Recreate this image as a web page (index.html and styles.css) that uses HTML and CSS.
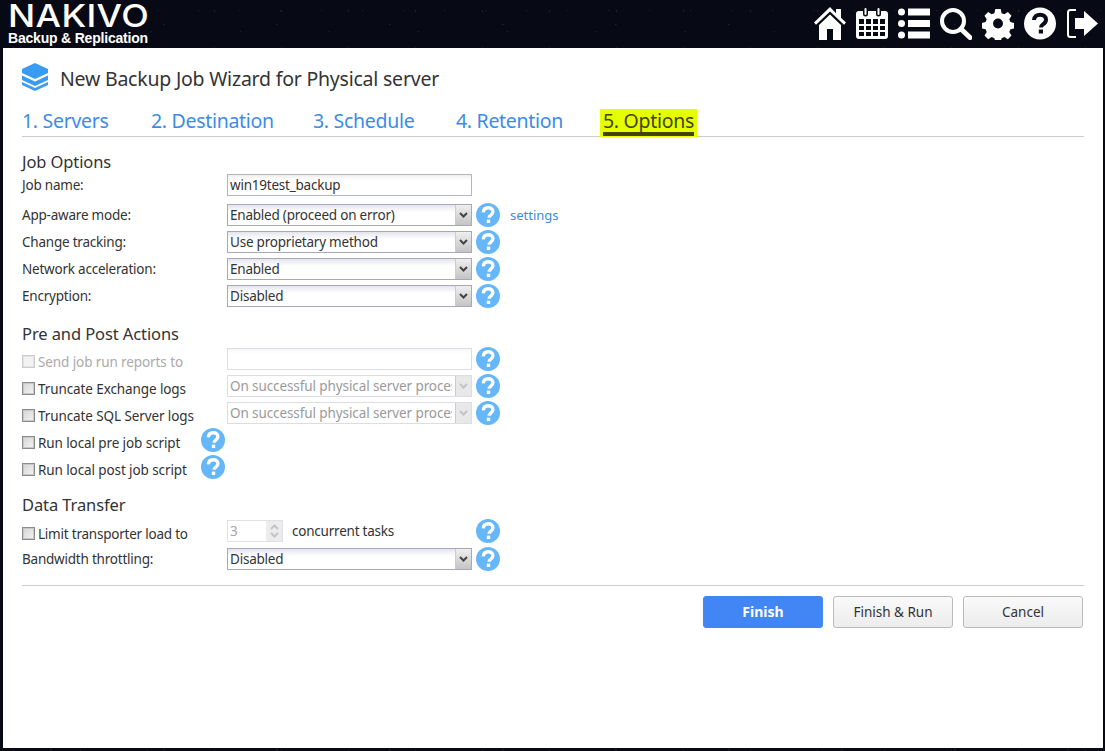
FILE: index.html
```html
<!DOCTYPE html>
<html lang="en">
<head>
<meta charset="utf-8">
<title>New Backup Job Wizard</title>
<link rel="stylesheet" href="styles.css">
</head>
<body>
<svg class="defs" width="0" height="0" aria-hidden="true">
  <symbol id="help" viewBox="0 0 24 24">
    <circle cx="12" cy="12" r="12" fill="#66b6fa"/>
    <path d="M7.3 9.300c.2-2.900 2.200-4.500 4.900-4.500 2.800 0 4.700 1.600 4.700 3.900 0 1.800-1 2.700-2.300 3.600-1 .7-1.500 1.200-1.500 2.500" fill="none" stroke="#fff" stroke-width="3.400"/>
    <rect x="10.800" y="16.600" width="3.400" height="3.400" fill="#fff"/>
  </symbol>
  <symbol id="chev" viewBox="0 0 9 6">
    <path d="M1 1l3.500 3.500L8 1" fill="none" stroke="currentColor" stroke-width="2"/>
  </symbol>
</svg>

<header class="topbar">
  <div class="logo">
    <div class="logo-main">NAKIVO</div>
    <div class="logo-sub">Backup &amp; Replication</div>
  </div>
  <nav class="icons">
    <svg class="ico" viewBox="0 0 32 33"><path fill="#fff" d="M16 0 0 15.500l2 2.300L16 4.500l14 13.300 2-2.300-5-4.800V2h-5v4.200zM16 7.500 5 18v15h8V22h6v11h8V18z"/></svg>
    <svg class="ico" viewBox="0 0 32 31"><path fill="#fff" fill-rule="evenodd" d="M3 3h4v3a2.500 2.500 0 0 0 5 0V3h8v3a2.500 2.500 0 0 0 5 0V3h4a3 3 0 0 1 3 3v22a3 3 0 0 1-3 3H3a3 3 0 0 1-3-3V6a3 3 0 0 1 3-3zM3 11v5h5v-5zm7 0v5h5v-5zm7 0v5h5v-5zm7 0v5h5v-5zM3 18v4h5v-4zm7 0v4h5v-4zm7 0v4h5v-4zm7 0v4h5v-4zM3 24v4h5v-4zm7 0v4h5v-4zm7 0v4h5v-4zm7 0v4h5v-4z"/><path d="M9.500 1v5M22.500 1v5" stroke="#fff" stroke-width="2" stroke-linecap="round"/></svg>
    <svg class="ico" viewBox="0 0 32 30"><g fill="#fff"><circle cx="3.500" cy="3.500" r="3.500"/><circle cx="3.500" cy="15" r="3.500"/><circle cx="3.500" cy="26.500" r="3.500"/><rect x="10" y="0" width="22" height="7"/><rect x="10" y="11.500" width="22" height="7"/><rect x="10" y="23" width="22" height="7"/></g></svg>
    <svg class="ico" viewBox="0 0 32 31"><circle cx="13" cy="13" r="11" fill="none" stroke="#fff" stroke-width="4"/><path d="M21 21l9 8.500" stroke="#fff" stroke-width="5" stroke-linecap="round"/></svg>
    <svg class="ico" viewBox="0 0 32 32"><path fill="#fff" fill-rule="evenodd" d="M13 0h6l1 4.500 3 1.300 4-2.500 4 4.200-2.500 3.900 1.300 3 4.200 1v6l-4.200 1-1.300 3 2.500 3.900-4 4.200-4-2.500-3 1.300-1 4.200h-6l-1-4.200-3-1.300-4 2.500-4-4.200 2.500-3.900-1.300-3-4.200-1v-6l4.200-1 1.300-3L1 7.500l4-4.200 4 2.500 3-1.300zM16 10.500a5.500 5.500 0 1 0 0 11 5.500 5.500 0 0 0 0-11z" transform="translate(1.600 1.600) scale(.9)"/></svg>
    <svg class="ico" viewBox="0 0 32 32"><circle cx="16" cy="16" r="16" fill="#fff"/><path d="M10 12.500c.2-3.400 2.700-5.300 6.100-5.300 3.500 0 5.900 2 5.900 5 0 2.300-1.200 3.400-3 4.600-1.300.9-2 1.500-2 3.100" fill="none" stroke="#0a0c1a" stroke-width="4"/><rect x="14.800" y="22" width="4.200" height="4" fill="#0a0c1a"/></svg>
    <svg class="ico" viewBox="0 0 32 31"><path d="M10 2H4.500A2.500 2.500 0 0 0 2 4.500v22A2.500 2.500 0 0 0 4.500 29H10" fill="none" stroke="#fff" stroke-width="2"/><path fill="#fff" d="M9 10h9V3l14 12.500L18 28v-7H9z"/></svg>
  </nav>
</header>

<main class="panel">
  <div class="title-row">
    <svg class="stack" viewBox="0 0 26 28"><g fill="#3a9bf2"><path d="M13 0 26 6v4L13 16 0 10V6z"/><path d="M0 12.500 13 18.500l13-6V17L13 23 0 17z"/><path d="M0 19l13 6 13-6v3L13 28 0 22z"/></g></svg>
    <h1 class="title">New Backup Job Wizard for Physical server</h1>
  </div>

  <nav class="tabs">
    <a class="tab t1">1. Servers</a>
    <a class="tab t2">2. Destination</a>
    <a class="tab t3">3. Schedule</a>
    <a class="tab t4">4. Retention</a>
    <a class="tab active"><span>5. Options</span></a>
  </nav>

  <section class="form">
    <h2 class="heading">Job Options</h2>
    <div class="row tall"><label class="lbl">Job name:</label><input class="field" type="text" value="win19test_backup"></div>
    <div class="row"><label class="lbl">App-aware mode:</label><div class="select"><span class="val">Enabled (proceed on error)</span><span class="arrow"><svg class="chev"><use href="#chev"/></svg></span></div><svg class="help"><use href="#help"/></svg><a class="link">settings</a></div>
    <div class="row"><label class="lbl">Change tracking:</label><div class="select"><span class="val">Use proprietary method</span><span class="arrow"><svg class="chev"><use href="#chev"/></svg></span></div><svg class="help"><use href="#help"/></svg></div>
    <div class="row"><label class="lbl">Network acceleration:</label><div class="select"><span class="val">Enabled</span><span class="arrow"><svg class="chev"><use href="#chev"/></svg></span></div><svg class="help"><use href="#help"/></svg></div>
    <div class="row"><label class="lbl">Encryption:</label><div class="select"><span class="val">Disabled</span><span class="arrow"><svg class="chev"><use href="#chev"/></svg></span></div><svg class="help"><use href="#help"/></svg></div>

    <h2 class="heading second">Pre and Post Actions</h2>
    <div class="row"><label class="lbl chk off"><i class="box"></i>Send job run reports to</label><input class="field off" type="text" disabled><svg class="help"><use href="#help"/></svg></div>
    <div class="row"><label class="lbl chk"><i class="box"></i>Truncate Exchange logs</label><div class="select off"><span class="val">On successful physical server processing</span><span class="arrow"><svg class="chev"><use href="#chev"/></svg></span></div><svg class="help"><use href="#help"/></svg></div>
    <div class="row"><label class="lbl chk"><i class="box"></i>Truncate SQL Server logs</label><div class="select off"><span class="val">On successful physical server processing</span><span class="arrow"><svg class="chev"><use href="#chev"/></svg></span></div><svg class="help"><use href="#help"/></svg></div>
    <div class="row"><label class="lbl chk short"><i class="box"></i>Run local pre job script</label><svg class="help"><use href="#help"/></svg></div>
    <div class="row"><label class="lbl chk short"><i class="box"></i>Run local post job script</label><svg class="help"><use href="#help"/></svg></div>

    <h2 class="heading third">Data Transfer</h2>
    <div class="row"><label class="lbl chk limit"><i class="box"></i>Limit transporter load to</label><div class="spin"><span class="num">3</span><span class="spin-btns"><svg class="chev up"><use href="#chev"/></svg><svg class="chev"><use href="#chev"/></svg></span></div><span class="unit">concurrent tasks</span><svg class="help"><use href="#help"/></svg></div>
    <div class="row wide"><label class="lbl">Bandwidth throttling:</label><div class="select"><span class="val">Disabled</span><span class="arrow"><svg class="chev"><use href="#chev"/></svg></span></div><svg class="help"><use href="#help"/></svg></div>
  </section>

  <footer class="actions">
    <button class="btn primary" type="button">Finish</button>
    <button class="btn" type="button">Finish &amp; Run</button>
    <button class="btn" type="button">Cancel</button>
  </footer>
</main>
</body>
</html>
```
FILE: styles.css
```css
* { box-sizing: border-box; }
html, body { margin: 0; height: 751px; overflow: hidden; }
body {
  background-color: #070914;
  background-image:
    radial-gradient(circle at 20% 30%, #343748 0, transparent 1px),
    radial-gradient(circle at 70% 60%, #2a2d40 0, transparent 1px),
    radial-gradient(circle at 45% 85%, #2f3244 0, transparent 1px),
    radial-gradient(circle at 85% 15%, #25283a 0, transparent 1px);
  background-size: 67px 37px, 89px 53px, 113px 29px, 41px 71px;
  font-family: "Noto Sans", Tahoma, sans-serif;
  font-size: 13.5px;
  letter-spacing: -.22px;
  color: #333;
}
.defs { display: block; height: 0; }

.topbar { height: 48px; display: flex; justify-content: space-between; padding: 0 7px 0 8px; }
.logo { width: 141px; color: #fff; }
.logo-main { width: max-content; font: 500 31px/31px Inter, sans-serif; letter-spacing: .3px; white-space: nowrap; transform: scaleX(1.16); transform-origin: left center; }
.logo-sub { font: 700 14px/15px "Liberation Sans", sans-serif; letter-spacing: -.2px; white-space: nowrap; }
.icons { display: flex; gap: 10px; padding-top: 7px; align-items: flex-start; }
.ico { width: 32px; height: 33px; display: block; }

.panel { margin: 0 2px 0 3px; height: 700px; background: #fff; padding: 15px 19px 0 19px; }
.title-row { height: 28px; display: flex; align-items: center; }
.stack { width: 26px; height: 28px; margin: 0 12px 0 0; flex: none; }
.title { margin: 4px 0 0; font-size: 19.5px; font-weight: 400; line-height: 28px; color: #333; white-space: nowrap; }

.tabs { height: 46px; display: flex; border-bottom: 1px solid #ccc; align-items: flex-end; }
.tab { font-size: 19.5px; letter-spacing: -.3px; line-height: 28px; color: #3d8be6; white-space: nowrap; height: 33px; padding-top: 4px; }
.t1 { width: 129px; } .t2 { width: 162px; } .t3 { width: 143px; } .t4 { width: 144px; }
.active { margin-bottom: -1px; background: #e6ff00; height: 28px; width: 97px; padding: 0 3px; color: #444400; }
.active span { display: block; height: 27px; line-height: 24px; border-bottom: 4px solid #444400; }

.form { height: 448px; padding-top: 14px; }
.heading { margin: 0; font-size: 16.5px; letter-spacing: -.1px; font-weight: 400; line-height: 22px; color: #333; }
.second { margin-top: 14px; }
.third { margin-top: 14px; height: 23px; }

.row { display: flex; align-items: center; height: 27px; }
.row.tall { height: 30px; margin-top: -2px; padding-bottom: 2px; }
.row.wide { height: 29px; padding-top: 1px; }
.lbl { width: 205px; flex: none; white-space: nowrap; color: #333; display: flex; align-items: center; }
.chk { padding-top: 6px; letter-spacing: -.1px; }
.limit { letter-spacing: -.22px; }
.short { width: 179px; }
.off.chk { color: #aaa; }
.box { width: 13px; height: 13px; flex: none; margin-right: 3px; border: 1px solid #8a8a8a; outline: 1px solid #c8c8c8; outline-offset: -2px; background: linear-gradient(135deg, #d4d4d4, #f4f4f4); }
.off .box { border-color: #ccc; outline-color: #e4e4e4; background: #f2f2f2; }

.field { width: 245px; height: 22px; padding: 0 2px; border: 1px solid #b4b4c4; font: inherit; letter-spacing: inherit; color: #333; background: linear-gradient(#eee, #fff 5px); outline: none; }
.field.off { border-color: #dcdce4; background: linear-gradient(#f6f6f6, #fff 5px); }

.select { width: 245px; height: 22px; flex: none; display: flex; border: 1px solid #a8a8bc; background: linear-gradient(#e4e4ee, #fff 7px); }
.val { flex: 1; min-width: 0; padding-left: 2px; margin-right: 3px; line-height: 20px; white-space: nowrap; overflow: hidden; }
.arrow { width: 16px; flex: none; display: flex; align-items: center; justify-content: center; background: linear-gradient(#efefef, #c4c4c4); border-left: 1px solid #ccc; color: #444; }
.select.off { border-color: #dcdce4; background: #fff; color: #9a9a9a; letter-spacing: -.1px; }
.select.off .arrow { background: #e8e8e8; color: #c4c4c4; }
.chev { width: 9px; height: 6px; display: block; }

.help { width: 24px; height: 24px; flex: none; margin-left: 4px; display: block; }
.short + .help { margin-left: 0; }
.link { margin-left: 10px; color: #3d8be6; font-size: 13px; letter-spacing: 0; }

.spin { width: 56px; height: 22px; flex: none; display: flex; border: 1px solid #e0e0e6; color: #a8a8a8; }
.num { flex: 1; padding-left: 2px; line-height: 20px; }
.spin-btns { width: 16px; background: #ececec; display: flex; flex-direction: column; align-items: center; justify-content: space-around; color: #c4c4c4; padding: 2px 0; }
.up { transform: scaleY(-1); }
.unit { margin-left: 9px; width: 184px; white-space: nowrap; }
.unit + .help { margin-left: 0; }

.actions { border-top: 1px solid #ccc; padding-top: 10px; display: flex; justify-content: flex-end; gap: 10px; padding-right: 1px; }
.btn { width: 120px; height: 32px; border-radius: 3px; border: 1px solid #bbb; background: linear-gradient(#fafafa, #ececec); font: inherit; letter-spacing: 0; color: #333; padding: 0; }
.primary { background: #4285f4; border-color: #4285f4; color: #fff; font-weight: 700; font-size: 14px; padding-bottom: 2px; }
```
